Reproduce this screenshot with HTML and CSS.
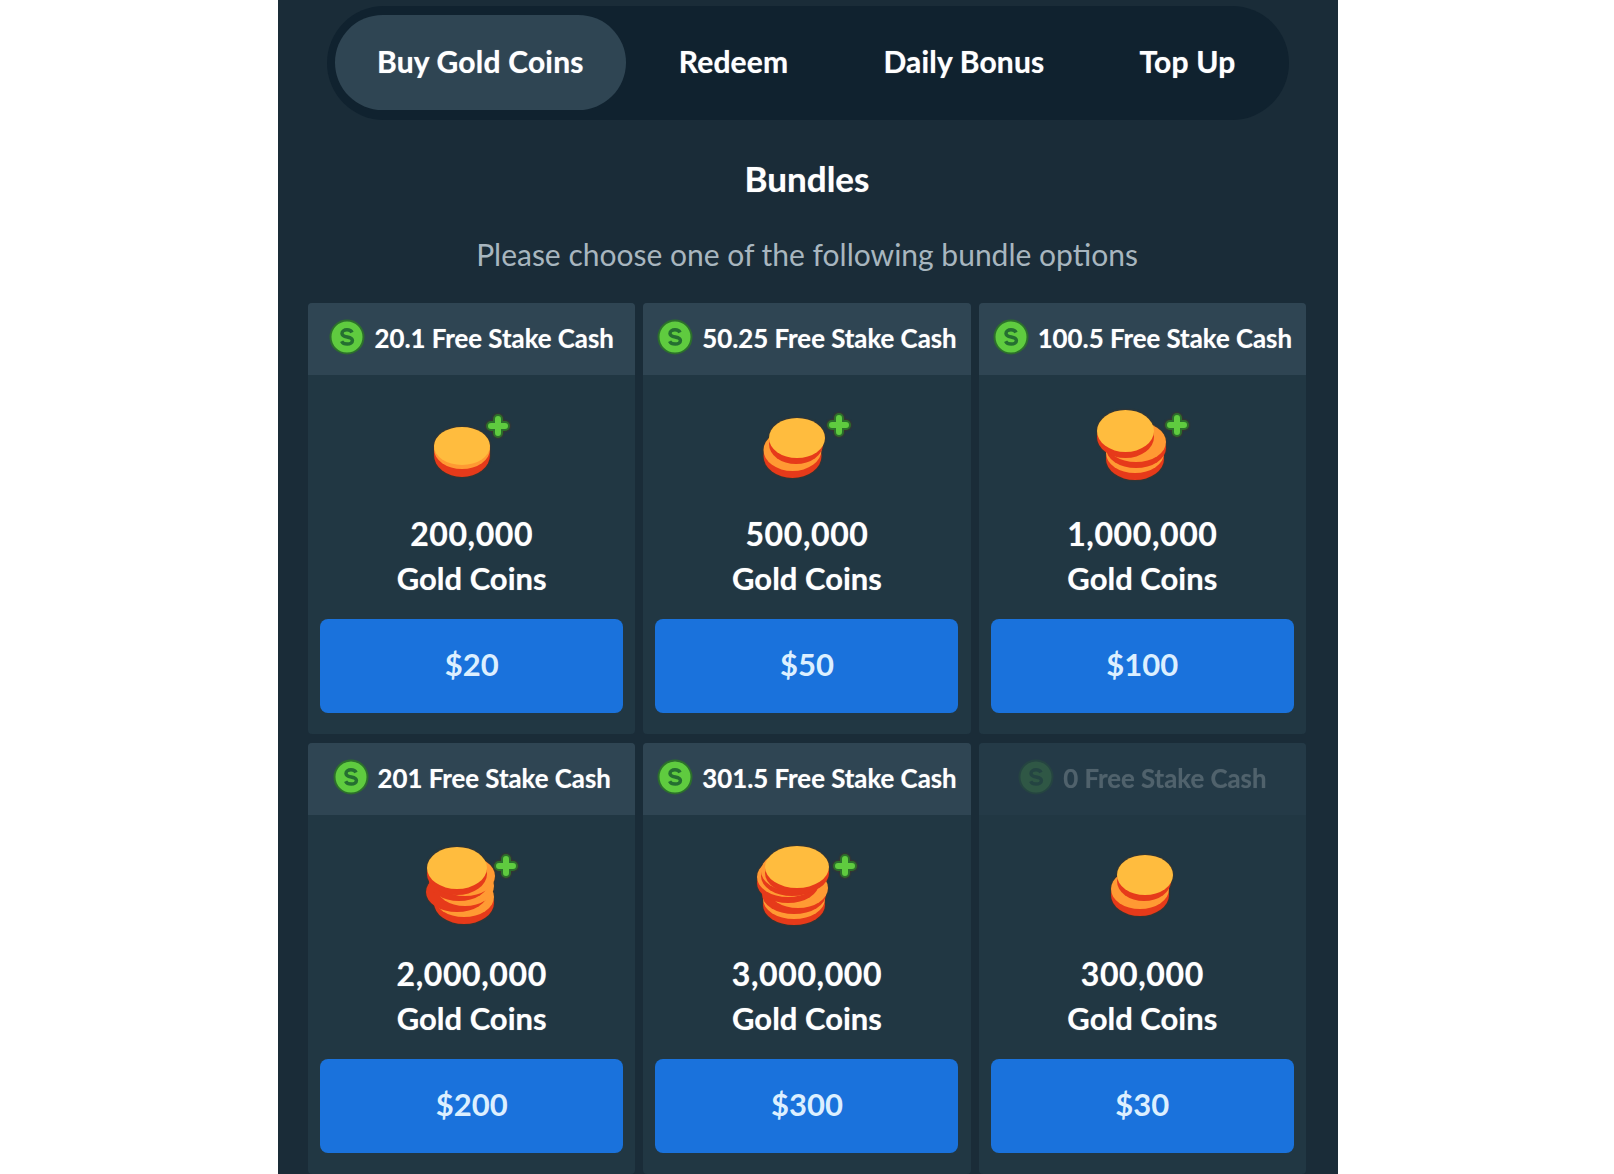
FILE: index.html
```html
<!DOCTYPE html>
<html lang="en">
<head>
    <meta charset="UTF-8">
    <meta name="viewport" content="width=device-width, initial-scale=1.0">
    <title>Buy Gold Coins</title>
    <link rel="stylesheet" href="styles.css">
</head>
<body>
    <svg class="defs" width="0" height="0">
        <symbol id="plus" viewBox="0 0 24 24">
            <path class="plus-edge" d="M12 5v14M5 12h14"/>
            <path class="plus-fill" d="M12 5v14M5 12h14"/>
        </symbol>
        <symbol id="stake" viewBox="0 0 36 36">
            <circle class="stake-disc" cx="18" cy="18" r="16.5"/>
            <path class="stake-s" d="M23 13.500c-.8-1.800-2.600-2.700-5-2.700-3 0-5 1.500-5 3.600 0 4.800 10.400 2.400 10.400 7 0 2.300-2.200 3.700-5.200 3.700-2.600 0-4.600-1-5.600-2.900"/>
        </symbol>
    </svg>

    <div class="panel">
        <div class="tabs">
            <div class="tab active">Buy Gold Coins</div>
            <div class="tab">Redeem</div>
            <div class="tab">Daily Bonus</div>
            <div class="tab">Top Up</div>
        </div>

        <h2>Bundles</h2>
        <p class="subtitle">Please choose one of the following bundle options</p>

        <div class="bundles">
            <div class="card">
                <div class="card-head">
                    <svg class="stake-icon"><use href="#stake"/></svg>
                    <span>20.1 Free Stake Cash</span>
                </div>
                <svg class="coins" width="76" height="82">
                    <ellipse class="coin-red" cx="28" cy="50" rx="28" ry="22"/>
                    <ellipse class="coin-orange" cx="28" cy="44" rx="28" ry="20"/>
                    <ellipse class="coin-gold" cx="28" cy="41" rx="28" ry="19"/>
                    <use href="#plus" x="52" y="9" width="24" height="24"/>
                </svg>
                <div class="amount number">200,000</div>
                <div class="amount">Gold Coins</div>
                <button>$20</button>
            </div>

            <div class="card">
                <div class="card-head">
                    <svg class="stake-icon"><use href="#stake"/></svg>
                    <span>50.25 Free Stake Cash</span>
                </div>
                <svg class="coins" width="88" height="82">
                    <ellipse class="coin-red" cx="29.500" cy="51" rx="29" ry="22"/>
                    <ellipse class="coin-orange" cx="29.500" cy="45" rx="29" ry="21"/>
                    <ellipse class="coin-red" cx="33" cy="39" rx="27" ry="20"/>
                    <ellipse class="coin-gold" cx="34" cy="33" rx="28" ry="20"/>
                    <use href="#plus" x="64" y="8" width="24" height="24"/>
                </svg>
                <div class="amount number">500,000</div>
                <div class="amount">Gold Coins</div>
                <button>$50</button>
            </div>

            <div class="card">
                <div class="card-head">
                    <svg class="stake-icon"><use href="#stake"/></svg>
                    <span>100.5 Free Stake Cash</span>
                </div>
                <svg class="coins" width="93" height="82">
                    <ellipse class="coin-red" cx="39" cy="54" rx="29" ry="21"/>
                    <ellipse class="coin-orange" cx="39" cy="48" rx="29" ry="20"/>
                    <ellipse class="coin-red" cx="40" cy="43" rx="30" ry="20"/>
                    <ellipse class="coin-orange" cx="40" cy="37" rx="30" ry="20"/>
                    <ellipse class="coin-red" cx="29.500" cy="32" rx="28.500" ry="21"/>
                    <ellipse class="coin-gold" cx="29.500" cy="26" rx="28.500" ry="21"/>
                    <use href="#plus" x="69" y="8" width="24" height="24"/>
                </svg>
                <div class="amount number">1,000,000</div>
                <div class="amount">Gold Coins</div>
                <button>$100</button>
            </div>

            <div class="card">
                <div class="card-head">
                    <svg class="stake-icon"><use href="#stake"/></svg>
                    <span>201 Free Stake Cash</span>
                </div>
                <svg class="coins" width="93" height="82">
                    <ellipse class="coin-red" cx="39" cy="58" rx="30" ry="21"/>
                    <ellipse class="coin-orange" cx="39" cy="52" rx="30" ry="20"/>
                    <ellipse class="coin-red" cx="32" cy="47" rx="31" ry="20"/>
                    <ellipse class="coin-orange" cx="40" cy="41" rx="29" ry="20"/>
                    <ellipse class="coin-red" cx="34" cy="36" rx="30" ry="20"/>
                    <ellipse class="coin-orange" cx="40" cy="31" rx="30" ry="20"/>
                    <ellipse class="coin-red" cx="32" cy="29" rx="30" ry="21"/>
                    <ellipse class="coin-gold" cx="32" cy="23" rx="30" ry="21"/>
                    <use href="#plus" x="69" y="9" width="24" height="24"/>
                </svg>
                <div class="amount number">2,000,000</div>
                <div class="amount">Gold Coins</div>
                <button>$200</button>
            </div>

            <div class="card">
                <div class="card-head">
                    <svg class="stake-icon"><use href="#stake"/></svg>
                    <span>301.5 Free Stake Cash</span>
                </div>
                <svg class="coins" width="101" height="82">
                    <ellipse class="coin-red" cx="38" cy="60" rx="31" ry="20"/>
                    <ellipse class="coin-orange" cx="38" cy="54" rx="31" ry="20"/>
                    <ellipse class="coin-red" cx="38" cy="49" rx="32" ry="20"/>
                    <ellipse class="coin-orange" cx="42" cy="43" rx="30" ry="20"/>
                    <ellipse class="coin-red" cx="32" cy="38" rx="31" ry="20"/>
                    <ellipse class="coin-orange" cx="32" cy="32" rx="31" ry="20"/>
                    <ellipse class="coin-red" cx="36" cy="31" rx="31" ry="20"/>
                    <ellipse class="coin-orange" cx="36" cy="26" rx="31" ry="20"/>
                    <ellipse class="coin-red" cx="41" cy="28" rx="32" ry="21"/>
                    <ellipse class="coin-gold" cx="41" cy="22" rx="32" ry="21"/>
                    <use href="#plus" x="77" y="9" width="24" height="24"/>
                </svg>
                <div class="amount number">3,000,000</div>
                <div class="amount">Gold Coins</div>
                <button>$300</button>
            </div>

            <div class="card">
                <div class="card-head off">
                    <svg class="stake-icon"><use href="#stake"/></svg>
                    <span>0 Free Stake Cash</span>
                </div>
                <svg class="coins" width="62" height="82">
                    <ellipse class="coin-red" cx="29" cy="50" rx="29" ry="21"/>
                    <ellipse class="coin-orange" cx="29" cy="44" rx="29" ry="20"/>
                    <ellipse class="coin-red" cx="33" cy="36" rx="27" ry="20"/>
                    <ellipse class="coin-gold" cx="34" cy="30" rx="28" ry="20"/>
                </svg>
                <div class="amount number">300,000</div>
                <div class="amount">Gold Coins</div>
                <button>$30</button>
            </div>
        </div>
    </div>
</body>
</html>
```

FILE: styles.css
```css
body {
    margin: 0;
    height: 1174px;
    overflow: hidden;
    background-color: #fff;
    font-family: "Lato", "Liberation Sans", sans-serif;
    color: #fff;
}
.defs {
    position: absolute;
}
.panel {
    width: 1060px;
    height: 1174px;
    margin-left: 278px;
    padding: 6px 32px 0 30px;
    box-sizing: border-box;
    background-color: #1a2c38;
    overflow: hidden;
}
.tabs {
    display: flex;
    gap: 11px;
    width: fit-content;
    margin: 0 0 0 19px;
    padding: 9px 12px 10px 8px;
    border-radius: 60px;
    background-color: #10222f;
}
.tab {
    height: 95px;
    padding: 0 42px;
    border-radius: 48px;
    font-size: 30px;
    font-weight: 700;
    letter-spacing: 0.2px;
    line-height: 93px;
    white-space: nowrap;
    text-shadow: 0 0 1px rgba(255,255,255,0.6);
}
.tab.active {
    background-color: #2f4553;
}
h2 {
    margin: 38px 0 0;
    font-size: 35px;
    font-weight: 700;
    line-height: 40px;
    text-align: center;
    text-shadow: 0 0 1px rgba(255,255,255,0.5);
}
.subtitle {
    margin: 37px 0 0;
    font-size: 30px;
    line-height: 38px;
    text-align: center;
    color: #a8b6bf;
}
.bundles {
    display: grid;
    grid-template-columns: repeat(3, 1fr);
    gap: 9px 8px;
    margin-top: 30px;
}
.card {
    display: flex;
    flex-direction: column;
    align-items: center;
    padding-bottom: 21px;
    border-radius: 4px;
    background-color: #213743;
}
.card-head {
    display: flex;
    align-items: center;
    justify-content: center;
    gap: 9px;
    width: 100%;
    height: 72px;
    padding-bottom: 2px;
    box-sizing: border-box;
    border-radius: 4px 4px 0 0;
    background-color: #2f4553;
    font-size: 25.800px;
    font-weight: 700;
    white-space: nowrap;
    text-shadow: 0 0 1px rgba(255,255,255,0.5);
}
.card-head.off {
    background-color: #243a47;
}
.card-head.off span,
.card-head.off svg {
    opacity: 0.2;
}
.stake-icon {
    width: 36px;
    height: 36px;
    margin-top: -2px;
}
.stake-disc {
    fill: #5fcb3f;
    stroke: #2c6f2c;
    stroke-width: 2;
}
.stake-s {
    fill: none;
    stroke: #256f31;
    stroke-width: 3.500;
}
.plus-edge {
    fill: none;
    stroke: #2c6f2c;
    stroke-width: 10;
    stroke-linecap: round;
}
.plus-fill {
    fill: none;
    stroke: #5fcb3f;
    stroke-width: 6;
    stroke-linecap: round;
}
.coins {
    margin-top: 30px;
    margin-bottom: 24px;
    filter: blur(0.5px) drop-shadow(0 0 1px rgba(90,50,20,0.9));
}
.coin-red {
    fill: #e63a1a;
}
.coin-orange {
    fill: #ff9a33;
}
.coin-gold {
    fill: #ffbc3e;
}
.amount {
    font-size: 31px;
    font-weight: 700;
    line-height: 45px;
    text-shadow: 0 0 1px rgba(255,255,255,0.5);
}
.amount.number {
    font-size: 32px;
    letter-spacing: 0.6px;
}
button {
    width: 303px;
    height: 94px;
    margin-top: 18px;
    padding-bottom: 6px;
    border: none;
    border-radius: 8px;
    background-color: #1a72dc;
    color: #dcefff;
    font-family: inherit;
    font-size: 31px;
    font-weight: 700;
}
```
